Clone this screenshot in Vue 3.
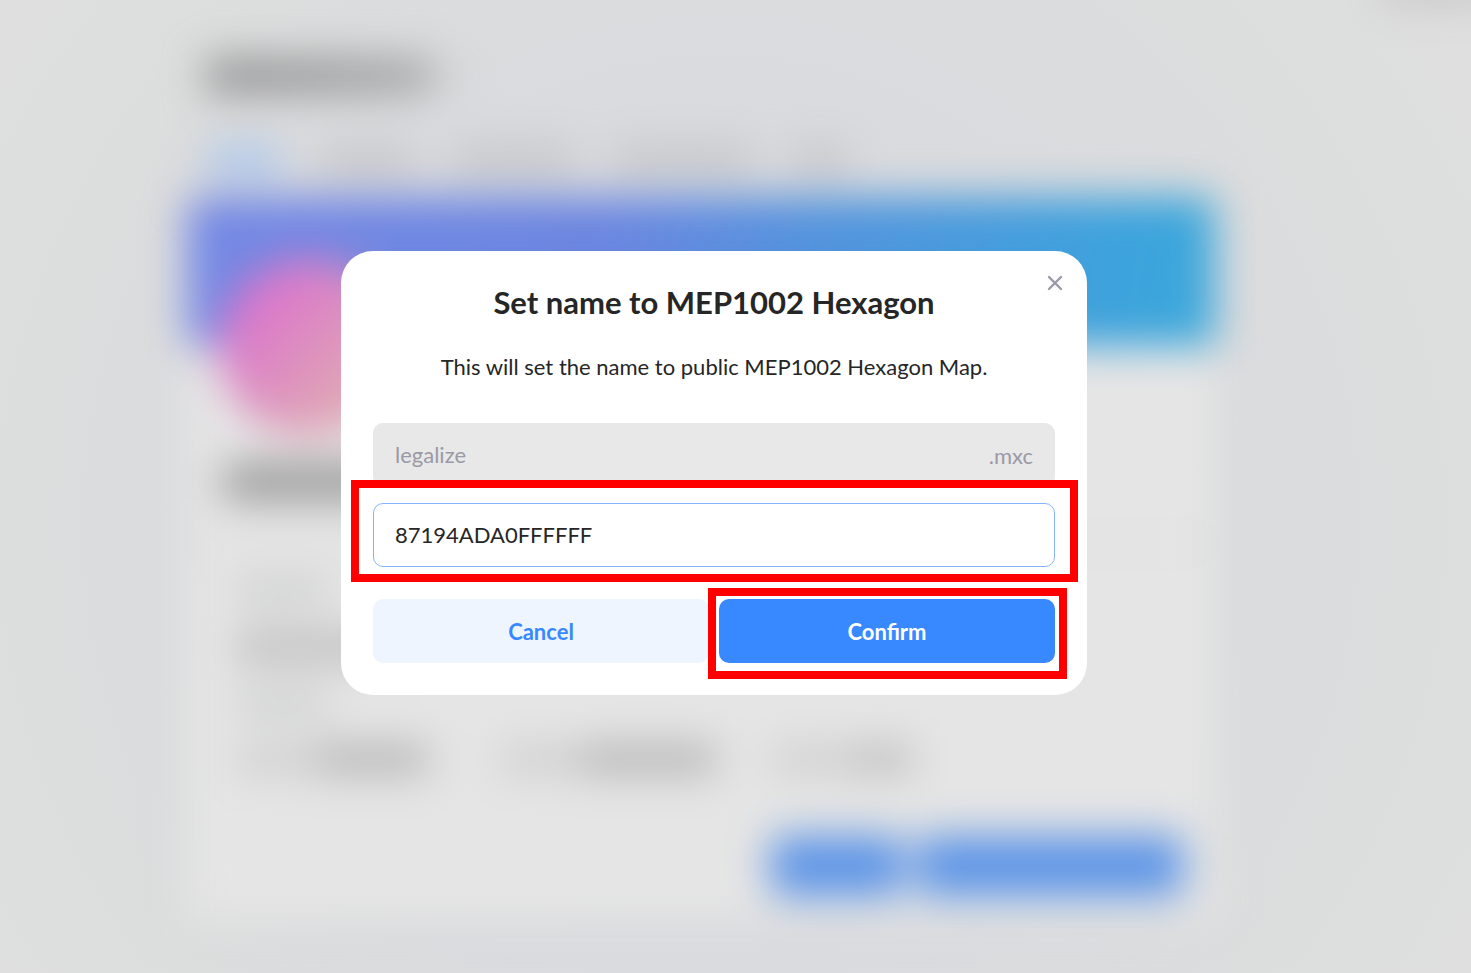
<script setup>
import { ref } from 'vue'

const name = ref('legalize')
const hexagon = ref('87194ADA0FFFFFF')
const tabs = ['active', 'short', 'medium', 'long', 'tiny']
</script>

<template>
  <div class="screen">
    <div class="backdrop" aria-hidden="true">
      <div class="corner"></div>
      <div class="page">
        <div class="heading"><i class="strong"></i><i class="weak"></i></div>
        <div class="tabs"><i v-for="tab in tabs" :key="tab" :class="tab"></i></div>
        <div class="banner"></div>
        <div class="card">
          <div class="avatar"></div>
          <div class="owner"></div>
          <div class="details">
            <i class="label"></i>
            <i class="value"></i>
            <i class="label"></i>
            <div class="facts">
              <i class="key"></i><i class="first"></i>
              <i class="key"></i><i class="second"></i>
              <i class="key"></i><i class="third"></i>
            </div>
          </div>
          <div class="actions"><i class="small"></i><i class="large"></i></div>
        </div>
      </div>
    </div>

    <div class="overlay">
      <form class="dialog" role="dialog" aria-labelledby="dialog-title" @submit.prevent>
        <button class="close" type="button" aria-label="Close">
          <svg viewBox="0 0 16 16" width="16" height="16" fill="none" stroke="currentColor" stroke-width="2.4" stroke-linecap="round">
            <path d="M2 2 14 14M14 2 2 14" />
          </svg>
        </button>
        <h1 id="dialog-title">Set name to MEP1002 Hexagon</h1>
        <p>This will set the name to public MEP1002 Hexagon Map.</p>
        <div class="field locked">
          <input v-model="name" aria-label="Name" type="text" disabled />
          <span>.mxc</span>
        </div>
        <div class="field marked">
          <input v-model="hexagon" aria-label="Hexagon ID" type="text" />
        </div>
        <div class="buttons">
          <button class="cancel" type="button">Cancel</button>
          <div class="marked">
            <button class="confirm" type="submit">Confirm</button>
          </div>
        </div>
      </form>
    </div>
  </div>
</template>

<style>
body {
  margin: 0;
}
</style>

<style scoped>
* {
  box-sizing: border-box;
}

.screen {
  position: relative;
  display: grid;
  min-height: 100vh;
  overflow: hidden;
  background: radial-gradient(circle at 49% 54%, #d8dade 0, #dadbde 50%, #dcdddd 75%, #dedfde 100%);
  font-family: Lato, "Liberation Sans", sans-serif;
  color: #262626;
}

.backdrop {
  position: absolute;
  inset: 0;
  padding-right: 70px;
  filter: blur(20px);
}

.corner {
  position: absolute;
  top: -30px;
  right: -30px;
  width: 120px;
  height: 30px;
  background: #c4c4c4;
}

.page {
  max-width: 1028px;
  margin: 0 auto;
  padding-top: 56px;
}

.page i {
  display: block;
  border-radius: 8px;
}

.heading {
  display: flex;
  align-items: center;
  gap: 10px;
  height: 40px;
  padding-left: 19px;
}

.heading .strong {
  width: 228px;
  height: 36px;
  background: linear-gradient(90deg, #929394, #98999a 50%, #a8a9aa);
}

.heading .weak {
  width: 18px;
  height: 18px;
  background: #cdcecf;
}

.tabs {
  display: flex;
  gap: 36px;
  margin-top: 52px;
  padding: 0 0 25px 19px;
}

.tabs i {
  width: 98px;
  height: 24px;
  background: #c0c1c4;
}

.tabs .active {
  width: 76px;
  background: #9fc1f0;
}

.tabs .medium {
  width: 124px;
}

.tabs .long {
  width: 142px;
}

.tabs .tiny {
  width: 58px;
}

.banner {
  height: 149px;
  border-radius: 12px 12px 0 0;
  background: linear-gradient(100deg, #7488e4 0, #6b86e0 40%, #5393dd 60%, #3da3dc 90%, #3aa8da 100%);
}

.card {
  background: #e5e5e5;
}

.avatar {
  width: 178px;
  height: 178px;
  margin: 0 0 0 32px;
  border-radius: 50%;
  background: linear-gradient(135deg, #db74cc 20%, #dfa5b5 75%);
  translate: 0 -88px;
}

.owner {
  width: 240px;
  height: 36px;
  margin: -60px 0 0 36px;
  background: #989898;
}

.details {
  display: flex;
  flex-direction: column;
  gap: 30px;
  margin-top: 42px;
  padding: 34px 48px 38px;
  border-top: 3px solid #d0d0d0;
  border-bottom: 2px solid #dddddd;
}

.details .label {
  width: 96px;
  height: 24px;
  background: #cccdce;
}

.details .value {
  width: 180px;
  height: 28px;
  background: #bababa;
}

.facts {
  display: flex;
  align-items: center;
}

.facts .key {
  width: 80px;
  height: 26px;
  background: #cdcdcd;
}

.facts .first,
.facts .second,
.facts .third {
  width: 114px;
  height: 28px;
  margin-right: 70px;
  background: #b2b2b2;
}

.facts .second {
  width: 138px;
  margin-right: 54px;
}

.facts .third {
  width: 62px;
  background: #bdbdbd;
}

.actions {
  display: flex;
  justify-content: flex-end;
  gap: 14px;
  padding: 23px 32px 23px 0;
}

.actions i {
  height: 60px;
  background: #5c94e6;
}

.actions .small {
  width: 132px;
}

.actions .large {
  width: 266px;
}

.overlay {
  position: relative;
  display: grid;
  place-items: center;
  padding: 0 43px 27px 0;
}

.dialog {
  position: relative;
  width: 100%;
  max-width: 746px;
  padding: 32px;
  border-radius: 32px;
  background: #ffffff;
}

h1 {
  margin: 0;
  font-size: 31px;
  line-height: 38px;
  font-weight: 700;
  text-align: center;
}

p {
  margin: 29px 0 39px;
  font-size: 22px;
  line-height: 34px;
  text-align: center;
}

.close {
  position: absolute;
  top: 20px;
  right: 20px;
  display: grid;
  place-items: center;
  width: 24px;
  height: 24px;
  padding: 0;
  border: 0;
  background: none;
  color: #9a99a5;
}

.field {
  position: relative;
  display: flex;
  align-items: center;
  height: 64px;
  padding: 0 21px;
  border: 1px solid #84b4ff;
  border-radius: 10px;
}

.field + .field {
  margin-top: 16px;
}

.field input {
  flex: 1;
  min-width: 0;
  padding: 0;
  border: 0;
  outline: 0;
  background: none;
  color: inherit;
  font: inherit;
  font-size: 22px;
  line-height: 32px;
}

.locked {
  border-color: #e8e8e8;
  background: #e8e8e8;
  color: #9a99a5;
  font-size: 22px;
}

.marked {
  position: relative;
}

.marked::after {
  content: "";
  position: absolute;
  inset: -24px;
  border: 8px solid #ff0000;
  pointer-events: none;
}

.field.marked::after {
  inset: -24px -24px -16px -23px;
}

.buttons .marked::after {
  inset: -11px -12px -16px -11px;
}

.buttons {
  display: grid;
  grid-template-columns: 1fr 1fr;
  gap: 10px;
  margin-top: 32px;
}

.buttons button {
  display: block;
  width: 100%;
  height: 64px;
  border: 0;
  border-radius: 10px;
  font: inherit;
  font-size: 22px;
  font-weight: 700;
}

.cancel {
  background: #eef5ff;
  color: #3888ff;
}

.confirm {
  background: #3888ff;
  color: #ffffff;
}
</style>
